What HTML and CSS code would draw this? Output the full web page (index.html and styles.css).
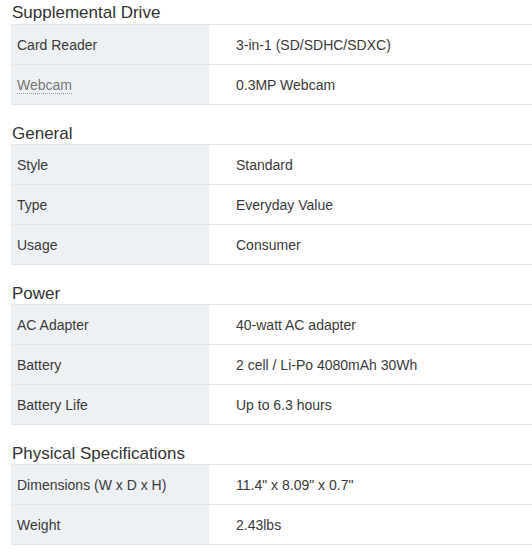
FILE: index.html
```html
<!DOCTYPE html>
<html>
<head>
<meta charset="utf-8">
<link rel="stylesheet" href="styles.css">
</head>
<body>
<div class="specs">
  <section class="group">
    <h3 class="group-title">Supplemental Drive</h3>
    <table class="spec-table">
      <tr><th>Card Reader</th><td>3-in-1 (SD/SDHC/SDXC)</td></tr>
      <tr><th><span class="term">Webcam</span></th><td>0.3MP Webcam</td></tr>
    </table>
  </section>
  <section class="group">
    <h3 class="group-title">General</h3>
    <table class="spec-table">
      <tr><th>Style</th><td>Standard</td></tr>
      <tr><th>Type</th><td>Everyday Value</td></tr>
      <tr><th>Usage</th><td>Consumer</td></tr>
    </table>
  </section>
  <section class="group">
    <h3 class="group-title">Power</h3>
    <table class="spec-table">
      <tr><th>AC Adapter</th><td>40-watt AC adapter</td></tr>
      <tr><th>Battery</th><td>2 cell / Li-Po 4080mAh 30Wh</td></tr>
      <tr><th>Battery Life</th><td>Up to 6.3 hours</td></tr>
    </table>
  </section>
  <section class="group">
    <h3 class="group-title">Physical Specifications</h3>
    <table class="spec-table">
      <tr><th>Dimensions (W x D x H)</th><td>11.4" x 8.09" x 0.7"</td></tr>
      <tr><th>Weight</th><td>2.43lbs</td></tr>
    </table>
  </section>
</div>
</body>
</html>
```
FILE: styles.css
```css
html, body {
  margin: 0;
  padding: 0;
  background: #fff;
}
body {
  font-family: "Liberation Sans", Arial, sans-serif;
  color: #333;
}
.specs {
  padding: 0 0 0 11px;
}
.group-title {
  margin: 0;
  padding: 0 0 0 1px;
  font-size: 17px;
  font-weight: normal;
  line-height: 20px;
  height: 20px;
  color: #333;
}
.group {
  padding-top: 19px;
}
.group:first-child {
  padding-top: 3px;
}
.group:first-child .group-title {
  height: 21px;
}
.spec-table {
  width: 100%;
  border-collapse: collapse;
  font-size: 14px;
}
.spec-table th,
.spec-table td {
  height: 39px;
  padding: 0 6px;
  border-top: 1px solid #e6e6e6;
  border-bottom: 1px solid #e6e6e6;
  text-align: left;
  font-weight: normal;
  vertical-align: middle;
}
.spec-table th {
  width: 186px;
  background: #eef1f4;
  color: #3a3a3a;
}
.spec-table td {
  padding-left: 27px;
  color: #3a3a3a;
}
.term {
  color: #777;
  border-bottom: 1px dotted #999;
}
```
